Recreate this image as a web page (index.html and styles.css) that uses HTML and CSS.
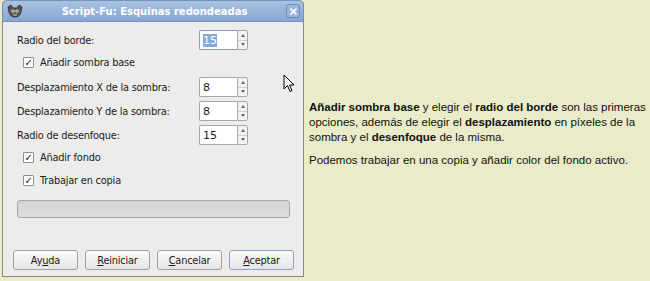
FILE: index.html
```html
<!DOCTYPE html>
<html lang="es">
<head>
  <meta charset="UTF-8" />
  <title>Script-Fu: Esquinas redondeadas</title>
  <link rel="stylesheet" href="styles.css">
</head>
<body>

  <div class="page">

    <!-- Dialog window -->
    <div class="window">
      <div class="titlebar">
        <span class="app-icon">
          <svg width="16" height="14" viewBox="0 0 16 14">
            <path d="M1 3 L4 1 L6 4 L10 4 L12 1 L15 3 L14 8 Q13 13 8 13 Q3 13 2 8 Z" fill="#5a554c" stroke="#2e2b26" stroke-width="0.8"/>
            <circle cx="6" cy="7" r="1.6" fill="#fff"/>
            <circle cx="10" cy="7" r="1.6" fill="#fff"/>
            <circle cx="6" cy="7" r="0.7" fill="#000"/>
            <circle cx="10" cy="7" r="0.7" fill="#000"/>
            <path d="M6 10.5 Q8 12 10 10.5" stroke="#d8d2c4" stroke-width="1" fill="none"/>
          </svg>
        </span>
        <span class="title">Script-Fu: Esquinas redondeadas</span>
        <span class="close">
          <svg width="9" height="9" viewBox="0 0 9 9">
            <path d="M1.5 1.5 L7.5 7.5 M7.5 1.5 L1.5 7.5" stroke="#fff" stroke-width="1.6"/>
          </svg>
        </span>
      </div>

      <div class="content">
        <div class="row">
          <label>Radio del borde:</label>
          <div class="spin focused">
            <span class="value"><span class="selected">15</span></span>
            <span class="arrows"><i class="up"></i><i class="down"></i></span>
          </div>
        </div>

        <div class="check"><span class="box">&#10003;</span>Añadir sombra base</div>

        <div class="row">
          <label>Desplazamiento X de la sombra:</label>
          <div class="spin">
            <span class="value">8</span>
            <span class="arrows"><i class="up"></i><i class="down"></i></span>
          </div>
        </div>

        <div class="row">
          <label>Desplazamiento Y de la sombra:</label>
          <div class="spin">
            <span class="value">8</span>
            <span class="arrows"><i class="up"></i><i class="down"></i></span>
          </div>
        </div>

        <div class="row">
          <label>Radio de desenfoque:</label>
          <div class="spin">
            <span class="value">15</span>
            <span class="arrows"><i class="up"></i><i class="down"></i></span>
          </div>
        </div>

        <div class="check"><span class="box">&#10003;</span>Añadir fondo</div>
        <div class="check"><span class="box">&#10003;</span>Trabajar en copia</div>

        <div class="progress"></div>

        <div class="buttons">
          <button>Ay<u>u</u>da</button>
          <button><u>R</u>einiciar</button>
          <button><u>C</u>ancelar</button>
          <button class="default"><u>A</u>ceptar</button>
        </div>
      </div>

      <!-- mouse pointer -->
      <svg class="cursor" width="12" height="19" viewBox="0 0 12 19">
        <path d="M1 1 L1 15 L4.5 11.5 L7 17.5 L9 16.5 L6.5 11 L11 11 Z" fill="#fff" stroke="#000" stroke-width="1"/>
      </svg>
    </div>

    <!-- Explanation -->
    <div class="notes">
      <p><b>Añadir sombra base</b> y elegir el <b>radio del borde</b> son las primeras opciones, además de elegir el <b>desplazamiento</b> en píxeles de la sombra y el <b>desenfoque</b> de la misma.</p>
      <p>Podemos trabajar en una copia y añadir color del fondo activo.</p>
    </div>

  </div>

</body>
</html>
```

FILE: styles.css
```css
body {
  margin: 0;
  padding: 0;
  background-color: #e9ebc9;
  font-family: 'DejaVu Sans', sans-serif;
  overflow: hidden;
}

.page {
  display: flex;
  align-items: flex-start;
}

.window {
  position: relative;
  width: 302px;
  height: 277px;
  margin-left: 2px;
  box-sizing: border-box;
  background: #edeceb;
  border: 1px solid #8a8c89;
  border-top: none;
  border-radius: 5px 5px 0 0;
  display: flex;
  flex-direction: column;
}

.titlebar {
  height: 22px;
  display: flex;
  align-items: center;
  padding: 0 3px 0 4px;
  background: linear-gradient(#a9c1e2, #86a6d3);
  border: 1px solid #7591bd;
  border-radius: 5px 5px 0 0;
  margin: 0 -1px;
  box-sizing: border-box;
}

.app-icon {
  width: 16px;
  height: 14px;
  display: flex;
}

.title {
  flex: 1;
  text-align: center;
  color: #fff;
  font-weight: bold;
  font-size: 10px;
}

.close {
  width: 14px;
  height: 14px;
  border: 1px solid #6f8cba;
  border-radius: 3px;
  background: #9cb5d9;
  display: flex;
  align-items: center;
  justify-content: center;
  box-sizing: border-box;
}

.content {
  flex: 1;
  display: flex;
  flex-direction: column;
  padding: 8px 9px 6px 10px;
  font-size: 9.8px;
  letter-spacing: -0.2px;
  color: #1a1a1a;
}

.row {
  display: flex;
  align-items: center;
  justify-content: space-between;
  height: 20px;
  padding-left: 4px;
  margin-right: 46px;
  margin-bottom: 4px;
}

.spin {
  width: 49px;
  height: 20px;
  display: flex;
  box-sizing: border-box;
}

.spin .value {
  flex: 1;
  background: #fff;
  border: 1px solid #a7a7a5;
  border-right: none;
  border-radius: 2px 0 0 2px;
  display: flex;
  align-items: center;
  padding-left: 3px;
  font-size: 11px;
  letter-spacing: 0;
}

.spin.focused .value {
  border-color: #7b9fd0;
}

.selected {
  background: #86a9da;
  color: #fff;
}

.arrows {
  width: 9px;
  border: 1px solid #a7a7a5;
  border-radius: 0 2px 2px 0;
  background: #f3f2f1;
  display: flex;
  flex-direction: column;
}

.arrows i {
  flex: 1;
  display: flex;
  align-items: center;
  justify-content: center;
}

.arrows i + i {
  border-top: 1px solid #cfcecd;
}

.arrows .up::after,
.arrows .down::after {
  content: "";
  border-left: 2px solid transparent;
  border-right: 2px solid transparent;
}

.arrows .up::after {
  border-bottom: 3px solid #666;
}

.arrows .down::after {
  border-top: 3px solid #666;
}

.check {
  display: flex;
  align-items: center;
  height: 16px;
  margin: 0 0 7px 10px;
}

.check .box {
  width: 11px;
  height: 11px;
  box-sizing: border-box;
  border: 1px solid #8f8f8d;
  border-radius: 1px;
  background: #fff;
  margin-right: 6px;
  font-size: 10px;
  line-height: 9px;
  text-align: center;
  color: #222;
}

.progress {
  height: 18px;
  margin: 5px 4px 0 4px;
  background: linear-gradient(#d6d5d3, #dedddb);
  border: 1px solid #a9a8a6;
  border-radius: 3px;
  box-sizing: border-box;
}

.buttons {
  margin-top: auto;
  display: flex;
  gap: 7px;
}

.buttons button {
  width: 65px;
  height: 20px;
  font-family: 'DejaVu Sans', sans-serif;
  font-size: 9.8px;
  letter-spacing: -0.2px;
  color: #1a1a1a;
  background: linear-gradient(#fbfbfa, #e6e5e3);
  border: 1px solid #a3a2a0;
  border-radius: 3px;
  padding: 0;
}

.buttons button.default {
  border-color: #8aa5cf;
}

.cursor {
  position: absolute;
  left: 280px;
  top: 74px;
}

.notes {
  margin-left: 5px;
  padding-top: 100px;
  width: 338px;
  font-family: 'Liberation Sans', Arial, sans-serif;
  font-size: 11.5px;
  line-height: 15px;
  color: #111;
}

.notes p {
  margin: 0 0 8px;
}
```
